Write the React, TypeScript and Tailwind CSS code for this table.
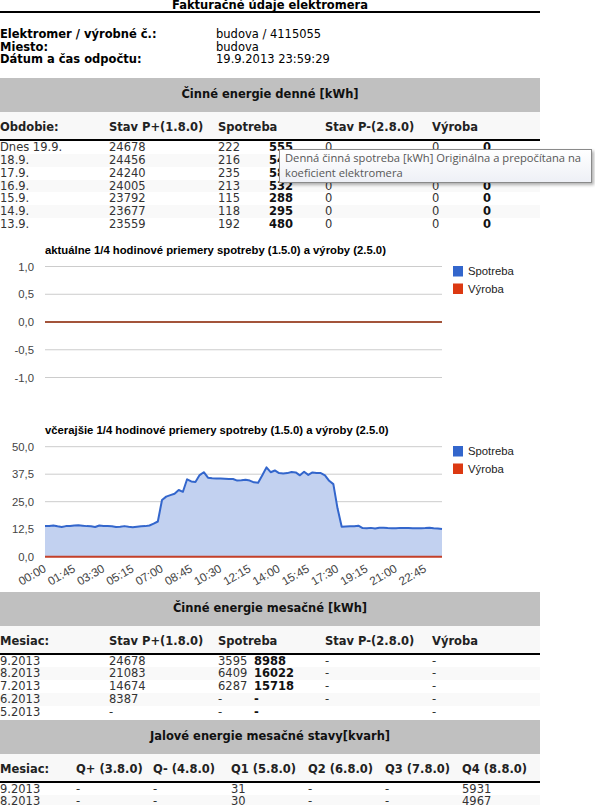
import React from "react";

const daily = [
  ["Dnes 19.9.", "24678", "222", "555", "0", "0", "0"],
  ["18.9.", "24456", "216", "540", "0", "0", "0"],
  ["17.9.", "24240", "235", "588", "0", "0", "0"],
  ["16.9.", "24005", "213", "532", "0", "0", "0"],
  ["15.9.", "23792", "115", "288", "0", "0", "0"],
  ["14.9.", "23677", "118", "295", "0", "0", "0"],
  ["13.9.", "23559", "192", "480", "0", "0", "0"],
];

const monthly = [
  ["9.2013", "24678", "3595", "8988", "-", "-"],
  ["8.2013", "21083", "6409", "16022", "-", "-"],
  ["7.2013", "14674", "6287", "15718", "-", "-"],
  ["6.2013", "8387", "-", "-", "-", "-"],
  ["5.2013", "-", "-", "-", "", "-"],
];

const reactive = [
  ["9.2013", "-", "-", "31", "-", "-", "5931"],
  ["8.2013", "-", "-", "30", "-", "-", "4967"],
];

const data2 = [
  14, 14, 14.2, 13.8, 13.5, 13.9, 14, 14.2, 14.3, 14.1, 13.9, 13.8, 13.5, 14.2, 14, 14, 13.8, 13.5, 13.6, 13.9, 13.6, 13.4,
  13.6, 13.8, 13.9, 14.2, 15, 16,
  25.8, 27.3, 28, 28.6, 30.3, 29.5, 35.2, 34.2, 34, 37.1, 38.4, 35.9, 35.7,
  35.6, 35.5, 35.4, 35.3, 35.3, 34.6, 34.7, 35, 34.6, 33.8, 33.6,
  37, 40.6, 38.4, 39.2, 38, 37.8, 38, 38.5, 38.3, 37, 38.6, 37.2, 38.3, 38, 38, 37, 34.5, 33, 22,
  13.6, 13.7, 13.8, 13.8, 14.1, 13, 12.9, 13.1, 12.8, 13.2, 13.2, 13, 12.9, 12.9, 13.1, 13.1, 13, 12.9, 12.9, 12.9, 13,
  13.2, 12.9, 12.8, 12.6,
];

const times = ["00:00", "01:45", "03:30", "05:15", "07:00", "08:45", "10:30", "12:15", "14:00", "15:45", "17:30", "19:15", "21:00", "22:45"];

const FONT = "'Liberation Sans', Arial, sans-serif";

function Legend({ y }: { y: number }) {
  return (
    <g fontFamily={FONT} fontSize={11.3} fill="#222">
      <rect x={453} y={y} width={10} height={10.5} fill="#3366cc" />
      <text x={468} y={y + 9}>Spotreba</text>
      <rect x={453} y={y + 17.5} width={10} height={10.5} fill="#dc3912" />
      <text x={468} y={y + 26.5}>Výroba</text>
    </g>
  );
}

function Chart1() {
  const ys = [35.5, 63.25, 91, 118.75, 146.5];
  const labels = ["1,0", "0,5", "0,0", "-0,5", "-1,0"];
  return (
    <svg width={595} height={174} className="block">
      <text x={45} y={23} fontFamily={FONT} fontSize={11.3} fontWeight="bold" fill="#000">
        aktuálne 1/4 hodinové priemery spotreby (1.5.0) a výroby (2.5.0)
      </text>
      {ys.map((y, k) => (
        <g key={k}>
          <line x1={45} x2={442} y1={y} y2={y} stroke="#cccccc" strokeWidth={1} />
          <text x={34} y={y + 4} textAnchor="end" fontFamily={FONT} fontSize={11.3} fill="#444">
            {labels[k]}
          </text>
        </g>
      ))}
      <line x1={45} x2={442} y1={91} y2={91} stroke="#a3543a" strokeWidth={2} />
      <Legend y={35} />
    </svg>
  );
}

function Chart2() {
  const base = 151.7;
  const toY = (v: number) => base - v * 2.2;
  const toX = (i: number) => 45 + (i * 397) / 95;
  const ys = [0, 12.5, 25, 37.5, 50];
  const labels = ["0,0", "12,5", "25,0", "37,5", "50,0"];
  const linePts = data2.map((v, i) => `${toX(i).toFixed(2)},${toY(v).toFixed(2)}`).join(" ");
  const areaPts = `${toX(0)},${base} ${linePts} ${toX(95)},${base}`;
  return (
    <svg width={595} height={187} className="block">
      <text x={45} y={29} fontFamily={FONT} fontSize={11.3} fontWeight="bold" fill="#000">
        včerajšie 1/4 hodinové priemery spotreby (1.5.0) a výroby (2.5.0)
      </text>
      {ys.map((v, k) => (
        <g key={k}>
          <line x1={45} x2={442} y1={toY(v)} y2={toY(v)} stroke="#cccccc" strokeWidth={1} />
          <text x={34} y={toY(v) + 4} textAnchor="end" fontFamily={FONT} fontSize={11.3} fill="#444">
            {labels[k]}
          </text>
        </g>
      ))}
      <polygon points={areaPts} fill="#c2d1f0" />
      <polyline points={linePts} fill="none" stroke="#3366cc" strokeWidth={2} strokeLinejoin="round" />
      <line x1={45} x2={442} y1={base} y2={base} stroke="#c4402a" strokeWidth={2} />
      {times.map((t, k) => {
        const x = toX(k * 7) + 2;
        return (
          <text
            key={t}
            x={x}
            y={166}
            textAnchor="end"
            fontFamily={FONT}
            fontSize={11.8}
            fill="#444"
            transform={`rotate(-30 ${x} 166)`}
          >
            {t}
          </text>
        );
      })}
      <Legend y={41} />
    </svg>
  );
}

function Bar({ title }: { title: string }) {
  return (
    <div className="h-[34px] bg-[#c0c0c0] flex items-center justify-center font-bold text-[#111]">{title}</div>
  );
}

export default function App() {
  return (
    <div
      className="w-[595px] h-[805px] overflow-hidden bg-white text-[11.5px] text-[#333]"
      style={{ fontFamily: "'DejaVu Sans', Verdana, sans-serif" }}
    >
      <div className="w-[540px]">
        {/* Title */}
        <div className="border-b-2 border-black">
          <div className="-mt-[1px] leading-[12px] text-center font-bold text-black">Fakturačné údaje elektromera</div>
        </div>

        {/* Info */}
        <div className="mt-[15px] leading-[12.7px] text-black">
          <div className="flex">
            <div className="w-[216px] font-bold">Elektromer / výrobné č.:</div>
            <div>budova / 4115055</div>
          </div>
          <div className="flex">
            <div className="w-[216px] font-bold">Miesto:</div>
            <div>budova</div>
          </div>
          <div className="flex">
            <div className="w-[216px] font-bold">Dátum a čas odpočtu:</div>
            <div>19.9.2013 23:59:29</div>
          </div>
        </div>

        {/* Daily table */}
        <div className="mt-[12px]">
          <Bar title="Činné energie denné [kWh]" />
          <div className="grid grid-cols-[109px_109px_51px_56px_107px_51px_57px] bg-[#f8f8f8] pt-[9px] pb-[5px] leading-[13px] font-bold text-[#222] border-b-2 border-black">
            <div>Obdobie:</div>
            <div>Stav P+(1.8.0)</div>
            <div className="col-span-2">Spotreba</div>
            <div>Stav P-(2.8.0)</div>
            <div className="col-span-2">Výroba</div>
          </div>
          <div className="relative">
            {daily.map((r, i) => (
              <div
                key={i}
                className={`grid grid-cols-[109px_109px_51px_56px_107px_51px_57px] leading-[12.8px] ${i % 2 === 1 ? "bg-[#f9f9f9]" : "bg-white"}`}
              >
                {r.map((c, j) => (
                  <div key={j} className={j === 3 || j === 6 ? "font-bold text-[#111]" : ""}>
                    {c}
                  </div>
                ))}
              </div>
            ))}
            <div
              className="absolute left-[279px] top-[8px] w-[313px] h-[34px] border border-[#8a8a8a] bg-gradient-to-b from-white to-[#eef0f6] shadow-[2px_2px_3px_rgba(0,0,0,0.3)] px-[5px] text-[11.2px] leading-[15px] text-[#575757] whitespace-nowrap"
              style={{ fontFamily: "'Open Sans', 'Noto Sans', sans-serif" }}
            >
              Denná činná spotreba [kWh] Originálna a prepočítana na
              <br />
              koeficient elektromera
            </div>
          </div>
        </div>
      </div>

      {/* Charts */}
      <Chart1 />
      <Chart2 />

      <div className="w-[540px]">
        {/* Monthly table */}
        <Bar title="Činné energie mesačné [kWh]" />
        <div className="grid grid-cols-[109px_109px_36px_71px_107px_108px] bg-[#f8f8f8] pt-[9px] pb-[5px] leading-[13px] font-bold text-[#222] border-b-2 border-black">
          <div>Mesiac:</div>
          <div>Stav P+(1.8.0)</div>
          <div className="col-span-2">Spotreba</div>
          <div>Stav P-(2.8.0)</div>
          <div>Výroba</div>
        </div>
        {monthly.map((r, i) => (
          <div
            key={i}
            className={`grid grid-cols-[109px_109px_36px_71px_107px_108px] leading-[12.8px] ${i % 2 === 1 ? "bg-[#f9f9f9]" : "bg-white"}`}
          >
            {r.map((c, j) => (
              <div key={j} className={j === 3 ? "font-bold text-[#111]" : ""}>
                {c}
              </div>
            ))}
          </div>
        ))}

        {/* Reactive table */}
        <div className="mt-[1px]">
          <Bar title="Jalové energie mesačné stavy[kvarh]" />
          <div className="grid grid-cols-[76px_77px_78px_77px_77px_77px_78px] bg-[#f8f8f8] pt-[9px] pb-[5px] leading-[13px] font-bold text-[#222] border-b-2 border-black whitespace-nowrap">
            <div>Mesiac:</div>
            <div>Q+ (3.8.0)</div>
            <div>Q- (4.8.0)</div>
            <div>Q1 (5.8.0)</div>
            <div>Q2 (6.8.0)</div>
            <div>Q3 (7.8.0)</div>
            <div>Q4 (8.8.0)</div>
          </div>
          {reactive.map((r, i) => (
            <div
              key={i}
              className={`grid grid-cols-[76px_77px_78px_77px_77px_77px_78px] leading-[12.8px] ${i % 2 === 1 ? "bg-[#f9f9f9]" : "bg-white"}`}
            >
              {r.map((c, j) => (
                <div key={j}>{c}</div>
              ))}
            </div>
          ))}
        </div>
      </div>
    </div>
  );
}
